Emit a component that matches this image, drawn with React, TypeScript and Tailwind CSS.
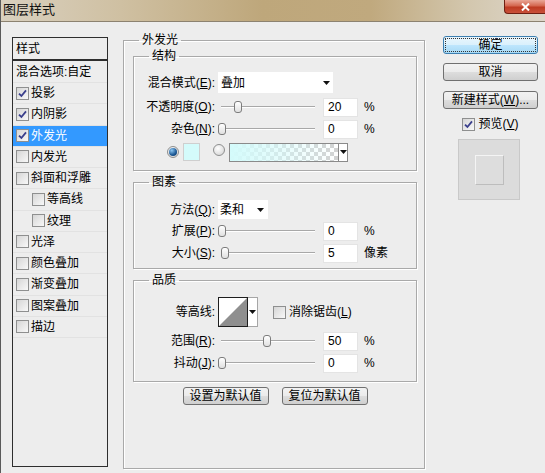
import React from "react";

const U = ({ c }: { c: string }) => <u className="underline underline-offset-[1px]">{c}</u>;

function Check({ checked }: { checked?: boolean }) {
  return (
    <span className="inline-flex shrink-0 w-[13px] h-[13px] border border-[#8e8f8f] bg-[linear-gradient(135deg,#d6d6d6,#f8f8f8)] items-center justify-center">
      {checked && (
        <svg width="9" height="9" viewBox="0 0 9 9">
          <path d="M1 4.6 L3.4 7 L8 1.4" fill="none" stroke="#3a3f8c" strokeWidth="1.8" />
        </svg>
      )}
    </span>
  );
}

function Radio({ on }: { on?: boolean }) {
  return (
    <span className="inline-flex shrink-0 w-[12px] h-[12px] rounded-full border border-[#8e8f8f] bg-[radial-gradient(circle_at_40%_35%,#ffffff,#cfcfcf)] items-center justify-center">
      {on && <span className="w-[8px] h-[8px] rounded-full bg-[radial-gradient(circle_at_35%_30%,#8cc6f2,#1a5794_60%,#0c3566_100%)]" />}
    </span>
  );
}

function Arrow() {
  return (
    <svg width="7" height="4" viewBox="0 0 7 4" className="shrink-0">
      <path d="M0 0H7L3.5 4Z" fill="#111" />
    </svg>
  );
}

function Slider({ pos }: { pos: number }) {
  return (
    <div className="relative w-[100px] h-[14px] shrink-0">
      <div className="absolute left-[3px] right-[3px] top-[6px] h-[2px] border-t border-[#a8a8a8] border-b border-b-white" />
      <div
        className="absolute top-[1px] w-[8px] h-[12px] rounded-[3px] border border-[#7c7c7c] bg-[linear-gradient(#ffffff,#e0e0e0)]"
        style={{ left: pos - 4 }}
      />
    </div>
  );
}

function NumBox({ v }: { v: string }) {
  return (
    <div className="ml-[5px] w-[35px] h-[19px] shrink-0 bg-white border border-[#e4e4e4] pl-[4px] flex items-center">
      {v}
    </div>
  );
}

function Lbl({ children }: { children: React.ReactNode }) {
  return <div className="w-[84px] shrink-0 text-right pr-[3px] whitespace-nowrap">{children}</div>;
}

function SliderRow({ label, pos, v, unit, cls }: { label: React.ReactNode; pos: number; v: string; unit: string; cls: string }) {
  return (
    <div className={`flex items-center ${cls}`}>
      <Lbl>{label}</Lbl>
      <Slider pos={pos} />
      <NumBox v={v} />
      <span className="ml-[6px]">{unit}</span>
    </div>
  );
}

function Group({ title, children, cls }: { title: string; children: React.ReactNode; cls?: string }) {
  return (
    <fieldset className={`border border-[#a9a9a9] shadow-[inset_1px_1px_0_#ffffff,1px_1px_0_#ffffff] ${cls ?? ""}`}>
      <legend className="ml-[15px] px-[3px] leading-[16px]">{title}</legend>
      {children}
    </fieldset>
  );
}

function Btn({ children, cls, primary }: { children: React.ReactNode; cls?: string; primary?: boolean }) {
  return (
    <div
      className={`flex items-center justify-center rounded-[3px] border whitespace-nowrap ${
        primary
          ? "border-[#3c7fb1] bg-[linear-gradient(#eaf6fd_0%,#d9f0fc_50%,#bee6fd_51%,#a7d9f5_100%)] outline-1 outline-dotted outline-offset-[-3px] outline-[#333]"
          : "border-[#707070] bg-[linear-gradient(#f2f2f2_0%,#ebebeb_50%,#dddddd_51%,#cfcfcf_100%)]"
      } ${cls ?? ""}`}
    >
      {children}
    </div>
  );
}

const items: { name: string; checked?: boolean; indent?: boolean; sel?: boolean }[] = [
  { name: "投影", checked: true },
  { name: "内阴影", checked: true },
  { name: "外发光", checked: true, sel: true },
  { name: "内发光" },
  { name: "斜面和浮雕" },
  { name: "等高线", indent: true },
  { name: "纹理", indent: true },
  { name: "光泽" },
  { name: "颜色叠加" },
  { name: "渐变叠加" },
  { name: "图案叠加" },
  { name: "描边" },
];

export default function App() {
  return (
    <div className="w-[545px] h-[473px] bg-[#ededed] flex flex-col overflow-hidden border-l border-[#5a5a5a] text-[12px] leading-[16px] text-black font-[family-name:'Liberation_Sans','Noto_Sans_CJK_SC',sans-serif]">
      {/* title bar */}
      <div className="h-[22px] shrink-0 flex border-b border-[#8c8270] bg-[linear-gradient(to_right,#d9d0bf_0%,#cfc0a2_22%,#bea77b_48%,#c0a97e_68%,#d3c7ae_86%,#ddd7cb_100%)]">
        <div className="pl-[2px] pt-[2px] text-[13px] leading-[16px] text-[#111]">图层样式</div>
        <div className="ml-auto w-[41px] h-[14px] rounded-bl-[4px] border-l border-b border-[#6e1f12] bg-[linear-gradient(#e9a797_0%,#d4664f_45%,#bd3a22_55%,#c9513a_100%)] flex items-center justify-center">
          <svg width="9" height="8" viewBox="0 0 9 8">
            <path d="M1 0.5 L8 7.5 M8 0.5 L1 7.5" stroke="#ffffff" strokeWidth="2" />
          </svg>
        </div>
      </div>

      <div className="flex flex-1 items-start">
        {/* style list */}
        <div className="ml-[11px] mt-[15px] w-[96px] h-[430px] shrink-0 border border-[#2e2e2e] flex flex-col">
          <div className="h-[23px] shrink-0 border-b-2 border-[#2e2e2e] pl-[3px] flex items-center">样式</div>
          <div className="h-[22px] shrink-0 border-b border-[#e2e2e2] pl-[3px] flex items-center">混合选项:自定</div>
          {items.map((it) => (
            <div
              key={it.name}
              className={`h-[21.25px] shrink-0 border-b border-[#e2e2e2] flex items-center ${it.indent ? "pl-[19px]" : "pl-[3px]"} ${
                it.sel ? "bg-[#3399ff] text-white" : ""
              }`}
            >
              <Check checked={it.checked} />
              <span className="ml-[2px]">{it.name}</span>
            </div>
          ))}
        </div>

        {/* main panel */}
        <div className="ml-[15px] mt-[10px] w-[302px] h-[437px] shrink-0 flex">
          <Group title="外发光" cls="w-[302px] h-[437px]">
            <div className="pl-[9px] pr-[7px]">
              <Group title="结构">
                <div className="pt-[8px] pb-[7px]">
                  <div className="flex items-center h-[21px]">
                    <Lbl>
                      混合模式(<U c="E" />):
                    </Lbl>
                    <div className="w-[115px] h-[21px] bg-white flex items-center justify-between pl-[3px] pr-[3px]">
                      <span>叠加</span>
                      <Arrow />
                    </div>
                  </div>
                  <SliderRow
                    cls="mt-[3px] h-[22px]"
                    label={<>不透明度(<U c="O" />):</>}
                    pos={20}
                    v="20"
                    unit="%"
                  />
                  <SliderRow cls="h-[22px]" label={<>杂色(<U c="N" />):</>} pos={4} v="0" unit="%" />
                  <div className="mt-[1px] h-[22px] flex items-center">
                    <div className="ml-[33px]">
                      <Radio on />
                    </div>
                    <div className="ml-[4px] w-[17px] h-[18px] bg-[#d4fbfb] border border-[#cfcfcf]" />
                    <div className="ml-[13px]">
                      <Radio />
                    </div>
                    <div className="ml-[4px] h-[19px] flex border border-[#8a8a8a]">
                      <div className="w-[108px] h-full bg-[image:linear-gradient(to_right,#d4fbfb_0%,rgba(212,251,251,0.6)_45%,rgba(255,255,255,0)_100%),repeating-conic-gradient(#d2d2d2_0_25%,#ffffff_0_50%)] bg-[size:100%_100%,8px_8px]" />
                      <div className="w-[9px] h-full bg-white border-l border-[#8a8a8a] flex items-center justify-center">
                        <Arrow />
                      </div>
                    </div>
                  </div>
                </div>
              </Group>

              <Group title="图素" cls="mt-[3px]">
                <div className="pt-[10px] pb-[4px]">
                  <div className="flex items-center h-[19px]">
                    <Lbl>
                      方法(<U c="Q" />):
                    </Lbl>
                    <div className="w-[50px] h-[19px] bg-white flex items-center justify-between pl-[2px] pr-[4px]">
                      <span>柔和</span>
                      <Arrow />
                    </div>
                  </div>
                  <SliderRow cls="mt-[1px] h-[22px]" label={<>扩展(<U c="P" />):</>} pos={4} v="0" unit="%" />
                  <SliderRow cls="h-[22px]" label={<>大小(<U c="S" />):</>} pos={7} v="5" unit="像素" />
                </div>
              </Group>

              <Group title="品质" cls="mt-[3px]">
                <div className="pt-[9px] pb-[7px]">
                  <div className="flex items-center h-[30px]">
                    <Lbl>等高线:</Lbl>
                    <div className="flex h-[30px]">
                      <div className="w-[30px] h-[30px] border border-[#1e1e1e] bg-white">
                        <svg width="28" height="28" viewBox="0 0 28 28" className="block">
                          <path d="M0 28 L28 0 L28 28 Z" fill="#8f8f8f" />
                        </svg>
                      </div>
                      <div className="w-[10px] h-[30px] bg-white border border-l-0 border-[#a6a6a6] flex items-center justify-center">
                        <Arrow />
                      </div>
                    </div>
                    <div className="ml-[15px] flex items-center">
                      <Check />
                      <span className="ml-[3px]">
                        消除锯齿(<U c="L" />)
                      </span>
                    </div>
                  </div>
                  <SliderRow cls="mt-[3px] h-[22px]" label={<>范围(<U c="R" />):</>} pos={49} v="50" unit="%" />
                  <SliderRow cls="h-[22px]" label={<>抖动(<U c="J" />):</>} pos={4} v="0" unit="%" />
                </div>
              </Group>

              <div className="mt-[5px] flex justify-center gap-[13px]">
                <Btn cls="w-[86px] h-[18px]">设置为默认值</Btn>
                <Btn cls="w-[86px] h-[18px]">复位为默认值</Btn>
              </div>
            </div>
          </Group>
        </div>

        {/* right column */}
        <div className="ml-[18px] mt-[14px] w-[95px] shrink-0 flex flex-col">
          <Btn primary cls="h-[18px]">确定</Btn>
          <Btn cls="mt-[9px] h-[18px]">取消</Btn>
          <Btn cls="mt-[10px] h-[18px]">
            新建样式(<U c="W" />)...
          </Btn>
          <div className="mt-[7px] h-[16px] flex items-center justify-center">
            <Check checked />
            <span className="ml-[3px]">
              预览(<U c="V" />)
            </span>
          </div>
          <div className="mt-[7px] ml-[15px] w-[62px] h-[61px] bg-[#dcdcdc] border border-[#c9c9c9] flex items-center justify-center">
            <div className="w-[29px] h-[30px] border border-t-[#f4f4f4] border-l-[#f4f4f4] border-r-[#bdbdbd] border-b-[#bdbdbd] bg-[#dddddd]" />
          </div>
        </div>
      </div>
    </div>
  );
}
